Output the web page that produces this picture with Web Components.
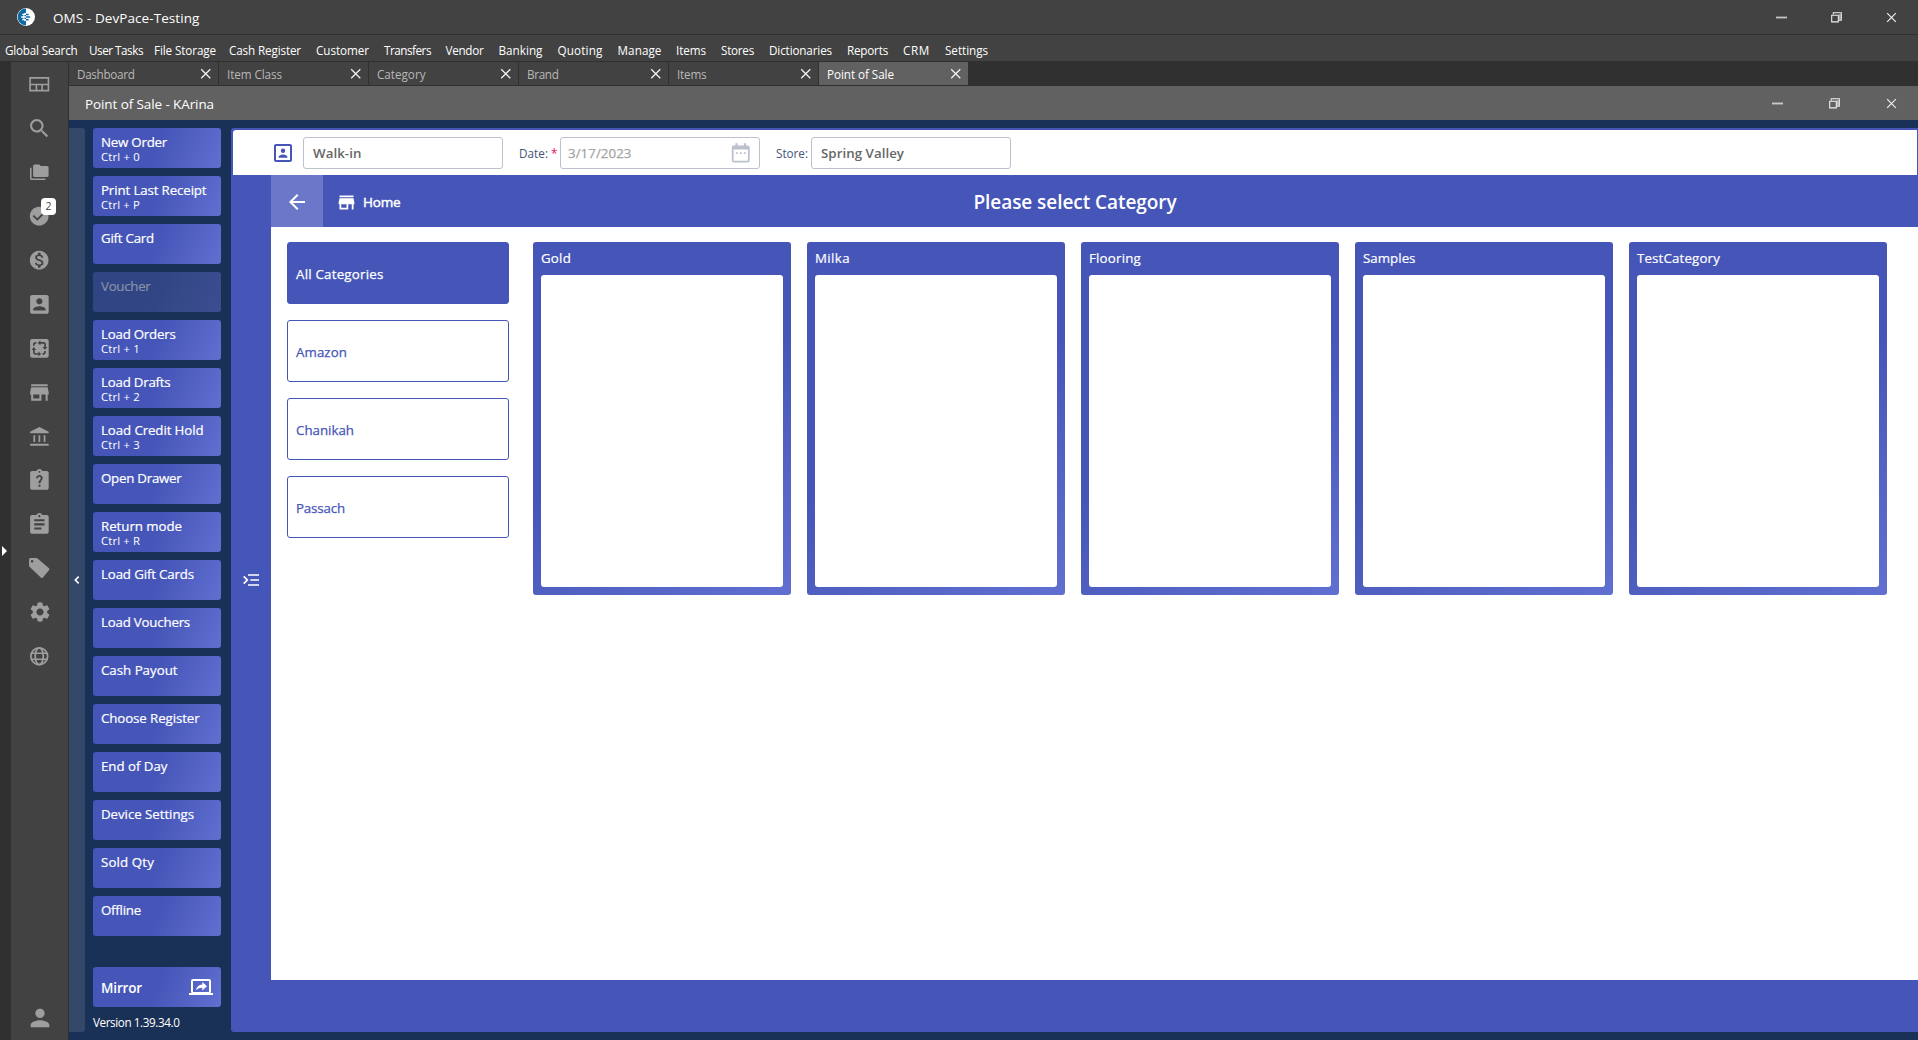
<!DOCTYPE html>
<html lang="en">
<head>
<meta charset="utf-8">
<title>OMS - DevPace-Testing</title>
<style>
html,body{margin:0;padding:0;height:100%;overflow:hidden}
body{font-family:"Open Sans","Noto Sans","Liberation Sans",sans-serif;background:#424242}
</style>
</head>
<body>
<oms-app></oms-app>
<script>
const ICONS = {
  layout: '<path d="M3 5.800h18v12.400H3zM3 12.200h18M9.200 12v6M14.800 12v6" fill="none" stroke="currentColor" stroke-width="1.6"/>',
  search: '<path d="M15.5 14h-.79l-.28-.27C15.41 12.59 16 11.11 16 9.5 16 5.91 13.09 3 9.5 3S3 5.91 3 9.5 5.91 16 9.5 16c1.61 0 3.09-.59 4.23-1.57l.27.28v.79l5 4.99L20.49 19l-4.99-5zm-6 0C7.01 14 5 11.99 5 9.5S7.01 5 9.5 5 14 7.01 14 9.5 11.99 14 9.5 14z"/>',
  folders: '<path d="M22,4H14L12,2H6A2,2 0 0,0 4,4V16A2,2 0 0,0 6,18H22A2,2 0 0,0 24,16V6A2,2 0 0,0 22,4M2,6H0V20A2,2 0 0,0 2,22H20V20H2V6Z"/>',
  check: '<path d="M12 2C6.48 2 2 6.48 2 12s4.48 10 10 10 10-4.48 10-10S17.52 2 12 2zm-2 15l-5-5 1.41-1.41L10 14.17l7.59-7.59L19 8l-9 9z"/>',
  dollar: '<path d="M12 2C6.48 2 2 6.48 2 12s4.48 10 10 10 10-4.48 10-10S17.52 2 12 2zm1.41 16.09V20h-2.67v-1.93c-1.71-.36-3.16-1.46-3.27-3.4h1.96c.1 1.05.82 1.87 2.65 1.87 1.96 0 2.4-.98 2.4-1.59 0-.83-.44-1.61-2.67-2.14-2.48-.6-4.18-1.62-4.18-3.67 0-1.72 1.39-2.84 3.11-3.21V4h2.67v1.95c1.86.45 2.79 1.86 2.85 3.39H14.3c-.05-1.11-.64-1.87-2.22-1.87-1.5 0-2.4.68-2.4 1.64 0 .84.65 1.39 2.67 1.91s4.18 1.39 4.18 3.91c-.01 1.83-1.38 2.83-3.12 3.16z"/>',
  contact: '<path d="M3 5v14c0 1.1.89 2 2 2h14c1.1 0 2-.9 2-2V5c0-1.1-.9-2-2-2H5c-1.11 0-2 .9-2 2zm12 4c0 1.66-1.34 3-3 3s-3-1.34-3-3 1.34-3 3-3 3 1.34 3 3zm-9 8c0-2 4-3.1 6-3.1s6 1.1 6 3.1v1H6v-1z"/>',
  contactLine: '<path d="M19 5v14H5V5h14m0-2H5c-1.1 0-2 .9-2 2v14c0 1.1.9 2 2 2h14c1.100 0 2-.9 2-2V5c0-1.100-.9-2-2-2z"/><circle cx="12" cy="9.700" r="2.200"/><path d="M7.600 16.800v-.8c0-1.600 2.900-2.500 4.400-2.500s4.400.9 4.400 2.500v.8z"/>',
  exchange: '<rect x="3" y="3" width="18" height="18" rx="2"/><g fill="none" stroke="#424242" stroke-width="1.6"><path d="M12.500 6.700H16q1.500 0 1.500 1.500V11M17.400 14.500V15.600q0 1.900-1.900 1.900H15M11.500 17.400H8.200q-1.500 0-1.500-1.500V13M6.600 9.500V8.600q0-1.900 1.900-1.900H9"/></g><path d="M13 4.400v4.600L10.300 6.700zM15.100 10.600h4.600l-2.300 2.800zM11 15.100v4.600l2.700-2.300zM4.400 13.500h4.500l-2.300-2.900z" fill="#424242"/>',
  store: '<path d="M12,18H6V14H12M21,14V12L20,7H4L3,12V14H4V20H14V14H18V20H20V14M20,4H4V6H20V4Z"/>',
  bank: '<path d="M12 2.800 21 7.400V9H3V7.400zM3 19.200h18v1.900H3zM6.200 10.800h1.700v6.700H6.200zM11.150 10.800h1.700v6.700h-1.700zM16.100 10.800h1.700v6.700h-1.700z"/>',
  ask: '<path fill-rule="evenodd" d="M19 3h-4.180C14.400 1.840 13.300 1 12 1s-2.400.84-2.820 2H5c-1.100 0-2 .9-2 2v14c0 1.100.9 2 2 2h14c1.100 0 2-.9 2-2V5c0-1.100-.9-2-2-2zm-7-.2a.9.900 0 1 1 0 1.800.9.900 0 0 1 0-1.800zM11.100 16.200h1.900v1.900h-1.900zM8.800 9.900c0-1.800 1.400-3.100 3.200-3.100s3.200 1.300 3.200 3c0 2.100-2.200 2.400-2.200 4.900h-1.900c0-3.200 2.200-3.200 2.200-4.900 0-.7-.6-1.300-1.300-1.300s-1.300.6-1.300 1.400z"/>',
  clipboard: '<path d="M19 3h-4.180C14.400 1.840 13.300 1 12 1c-1.300 0-2.400.84-2.820 2H5c-1.100 0-2 .9-2 2v14c0 1.100.9 2 2 2h14c1.100 0 2-.9 2-2V5c0-1.100-.9-2-2-2zm-7 0c.55 0 1 .45 1 1s-.45 1-1 1-1-.45-1-1 .45-1 1-1zm2 14H7v-2h7v2zm3-4H7v-2h10v2zm0-4H7V7h10v2z"/>',
  tag: '<path fill-rule="evenodd" d="M2 3.500C2 2.700 2.700 2 3.500 2H9q.9 0 1.600.6L21.300 11.800q1.200 1 .2 2.200L15.800 20.900q-1.100 1.200-2.300.1L2.700 10.700Q2 10 2 9zM5 3.900a1.300 1.300 0 1 0 0 2.600 1.300 1.300 0 0 0 0-2.600z"/>',
  gear: '<path d="M19.140 12.940c.04-.3.06-.61.06-.94s-.02-.64-.07-.94l2.030-1.580c.18-.14.23-.41.12-.61l-1.920-3.320c-.12-.22-.37-.29-.59-.22l-2.390.96c-.5-.38-1.030-.7-1.620-.94L14.400 2.810c-.04-.24-.24-.41-.48-.41h-3.840c-.24 0-.43.17-.47.41l-.36 2.540c-.59.24-1.130.57-1.620.94l-2.390-.96c-.22-.08-.47 0-.59.22L2.740 8.870c-.12.21-.08.47.12.61l2.030 1.580c-.05.3-.09.63-.09.94s.02.64.07.94l-2.030 1.580c-.18.14-.23.41-.12.61l1.920 3.320c.12.22.37.29.59.22l2.390-.96c.5.38 1.030.7 1.620.94l.36 2.540c.05.24.24.41.48.41h3.840c.24 0 .44-.17.47-.41l.36-2.540c.59-.24 1.130-.56 1.620-.94l2.390.96c.22.08.47 0 .59-.22l1.920-3.320c.12-.22.07-.47-.12-.61l-2.010-1.580zM12 15.600c-1.980 0-3.600-1.620-3.600-3.600s1.620-3.600 3.600-3.600 3.600 1.620 3.600 3.600-1.620 3.600-3.600 3.600z"/>',
  globe: '<g fill="none" stroke="currentColor" stroke-width="1.800"><circle cx="12" cy="12" r="9"/><ellipse cx="12" cy="12" rx="4.300" ry="9"/><path d="M3.800 8.800h16.400M3.800 15.200h16.400"/></g>',
  person: '<path d="M12 12c2.210 0 4-1.790 4-4s-1.790-4-4-4-4 1.790-4 4 1.790 4 4 4zm0 2c-2.670 0-8 1.340-8 4v2h16v-2c0-2.660-5.330-4-8-4z"/>',
  close: '<path d="M2.500 2.500 21.500 21.500M21.500 2.500 2.500 21.500" fill="none" stroke="currentColor" stroke-width="2.600"/>',
  minus: '<path d="M0 10h24v4H0z" opacity=".75"/>',
  restore: '<path d="M1.500 7h14.500v14.500H1.500z" fill="none" stroke="currentColor" stroke-width="2.400"/><path d="M5 5.500V1.500H22.500V18H17" fill="none" stroke="currentColor" stroke-width="2.400"/><path d="M17.500 5h4v12h-4z" opacity=".6"/>',
  back: '<path d="M20 11H7.830l5.590-5.590L12 4l-8 8 8 8 1.410-1.410L7.830 13H20v-2z"/>',
  indent: '<path d="M7.500 4.500H24M11 12H24M7.500 19.500H24M1 6.500 6.500 12 1 17.500" fill="none" stroke="currentColor" stroke-width="2.600"/>',
  chevron: '<path d="M16 4 8 12l8 8" fill="none" stroke="currentColor" stroke-width="4"/>',
  calendar: '<path fill-rule="evenodd" d="M4 4h2V1.500h2.500V4h7V1.500H18V4h2q2 0 2 2v15q0 2-2 2H4q-2 0-2-2V6q0-2 2-2zM4 8.500V21h16V8.500zM6.500 11.500h2v2h-2zM11 11.500h2v2h-2zM15.500 11.500h2v2h-2z"/>',
  share: '<path fill-rule="evenodd" d="M4 4h16q2 0 2 2v10.500q0 1.200-.8 1.500H24v2H0v-2h2.800Q2 17.700 2 16.500V6q0-2 2-2zM4 6v11h16V6z"/><path d="M7 15.200q.8-5 6.300-5.600V7l4.700 4.200-4.700 4.200v-2.600q-3.700-.1-6.300 2.400z"/>',
  logo: '<circle cx="12" cy="12" r="12" fill="#fff"/><path d="M12 0.800a11.200 11.200 0 0 0 0 22.400z" fill="#0e6aa5"/><path d="M7 8.500h5M5.500 12H12M7 15.500h5" stroke="#fff" stroke-width="1.700"/><path d="M12 7q-3 0-3 5t3 5" fill="none" stroke="#fff" stroke-width="1.500"/><path d="M12 8.500h3.500M12 12h5.500M12 15.500h3.500" stroke="#0e6aa5" stroke-width="2"/>'
};

class Base extends HTMLElement {
  constructor() { super(); this.attachShadow({ mode: 'open' }); }
  attr(n, d = '') { return this.getAttribute(n) ?? d; }
  connectedCallback() { this.shadowRoot.innerHTML = this.view(); }
}

customElements.define('oms-icon', class extends Base {
  view() {
    const s = this.attr('size', '24');
    return `<style>:host{display:block;flex:none;width:${s}px;height:${s}px}svg{display:block}</style>
    <svg width="${s}" height="${s}" viewBox="0 0 24 24" fill="currentColor">${ICONS[this.attr('name')]}</svg>`;
  }
});

/* Single-line label whose tracking is adjusted to fill the width given in "w". */
customElements.define('oms-text', class extends Base {
  connectedCallback() {
    this.shadowRoot.innerHTML = `<style>:host{display:block;flex:none;white-space:nowrap;width:${this.attr('w')}px}span{display:inline-block}</style><span><slot></slot></span>`;
    const s = this.shadowRoot.querySelector('span');
    const n = this.textContent.length;
    s.style.letterSpacing = '0px';
    const gap = (Number(this.attr('w')) - s.getBoundingClientRect().width) / n;
    s.style.letterSpacing = gap.toFixed(3) + 'px';
  }
});

customElements.define('oms-caption', class extends Base {
  view() {
    return `<style>:host{display:flex;align-items:center;color:#fff;box-sizing:border-box;font-size:13.5px}
    .c{margin-left:auto;display:flex;align-items:center;padding-right:21px;color:#eee}
    .c oms-icon:nth-child(2){margin:0 ${this.attr('g2', 44)}px 0 ${this.attr('g1', 44)}px}</style>
    <slot></slot><div class="c"><oms-icon name="minus" size="11"></oms-icon><oms-icon name="restore" size="11"></oms-icon><oms-icon name="close" size="11"></oms-icon></div>`;
  }
});

customElements.define('oms-menu', class extends Base {
  view() {
    const items = [['Global Search',72.5,0],['User Tasks',54,11.5],['File Storage',62,11],['Cash Register',72,13],['Customer',53,15],['Transfers',47,15],['Vendor',38,14.5],['Banking',44,15],['Quoting',45,15],['Manage',44,15],['Items',30,14.5],['Stores',33,15],['Dictionaries',63,15],['Reports',41,15],['CRM',27,15],['Settings',43,15]];
    return `<style>:host{display:flex;align-items:center;height:26px;padding:3px 0 0 5px;box-sizing:border-box;border:0;color:#fff;font-size:11.700px;line-height:16px}</style>` +
      items.map(([t, w, m]) => `<oms-text w="${w}" style="margin-left:${m}px">${t}</oms-text>`).join('');
  }
});

customElements.define('oms-tab', class extends Base {
  view() {
    const on = this.hasAttribute('active');
    return `<style>:host{display:flex;align-items:center;justify-content:space-between;width:149px;height:23px;box-sizing:border-box;padding:0 7px 0 8px;background:${on ? '#616161' : '#424242'};color:${on ? '#fff' : '#b8b8b8'};font-size:11.700px;line-height:17px}
    oms-text{padding-top:2px}oms-icon{color:#f4f4f4}</style><oms-text w="${this.attr('w')}">${this.attr('label')}</oms-text><oms-icon name="close" size="11.500"></oms-icon>`;
  }
});

customElements.define('oms-rail', class extends Base {
  view() {
    const icons = [['layout',24.5],['search',24.8],['folders',18.6],['check',22.4],['dollar',22.4],['contact',24.8],['exchange',24.8],['store',24.8],['bank',24.8],['ask',24.8],['clipboard',24.8],['tag',24.5],['gear',24],['globe',22.5]];
    return `<style>:host{display:flex;flex-direction:column;align-items:center;width:57px;box-sizing:border-box;background:#424242;color:#9e9e9e}
    .i{height:44px;width:57px;display:flex;align-items:center;justify-content:center;position:relative}
    b{position:absolute;left:30px;top:4px;width:15px;height:17px;border-radius:4px;background:#fff;color:#424242;font:10.500px/17px "Open Sans",sans-serif;text-align:center}
    .u{margin-top:auto;height:44px}</style>` +
      icons.map(([n, s]) => `<div class="i"><oms-icon name="${n}" size="${s}"></oms-icon>${n === 'check' ? '<b>2</b>' : ''}</div>`).join('') +
      `<div class="i u"><oms-icon name="person" size="28"></oms-icon></div>`;
  }
});

customElements.define('oms-action', class extends Base {
  view() {
    const k = this.attr('key');
    return `<style>:host{display:block;flex:none;width:128px;height:40px;box-sizing:border-box;padding:6px 8px;border-radius:3px;color:#fff;background:linear-gradient(114deg,#4656b8 50%,#606fd0);font-size:13.300px;line-height:16px;font-weight:500}
    :host([disabled]){background:linear-gradient(114deg,#314584 50%,#3d4e90);color:#8791a9}
    .l{-webkit-text-stroke:.2px currentColor}
    .k{font-size:11.300px;line-height:13px;font-weight:400}</style>
    <oms-text class="l" w="${this.attr('w')}">${this.attr('label')}</oms-text>${k ? `<oms-text class="k" w="39">${k}</oms-text>` : ''}`;
  }
});

customElements.define('oms-actions', class extends Base {
  view() {
    const a = [['New Order',66,'Ctrl + 0'],['Print Last Receipt',105.5,'Ctrl + P'],['Gift Card',53],['Voucher',49.5,'',1],['Load Orders',74.5,'Ctrl + 1'],['Load Drafts',69.5,'Ctrl + 2'],['Load Credit Hold',102.5,'Ctrl + 3'],['Open Drawer',80.5],['Return mode',81,'Ctrl + R'],['Load Gift Cards',93],['Load Vouchers',89],['Cash Payout',76.500],['Choose Register',98.500],['End of Day',66.500],['Device Settings',93],['Sold Qty',53],['Offline',40]];
    return `<style>:host{display:flex;flex-direction:column;width:128px;gap:8px}
    .m{margin-top:23px;height:40px;box-sizing:border-box;border-radius:3px;padding:0 8px;display:flex;justify-content:space-between;align-items:center;color:#fff;background:linear-gradient(114deg,#4656b8 50%,#606fd0);font-size:13.500px;font-weight:600}
    .m oms-text{padding-top:2px}.v{font-size:11.700px;line-height:16px;color:#fff;margin-top:-1px}</style>` +
      a.map(([l, w, k, d]) => `<oms-action label="${l}" w="${w}" key="${k || ''}" ${d ? 'disabled' : ''}></oms-action>`).join('') +
      `<div class="m"><oms-text w="41">Mirror</oms-text><oms-icon name="share" size="24"></oms-icon></div><oms-text class="v" w="86.500">Version 1.39.34.0</oms-text>`;
  }
});

customElements.define('oms-field', class extends Base {
  view() {
    return `<style>:host{display:flex;align-items:center;justify-content:space-between;width:200px;height:32px;box-sizing:border-box;border:1px solid #bcc0cf;border-radius:3px;padding:0 9px;background:#fff;color:#666;font-size:13.300px;font-weight:600}</style><slot></slot>`;
  }
});

customElements.define('oms-orderbar', class extends Base {
  view() {
    return `<style>:host{display:flex;align-items:center;height:45px;margin:2px 1px 0 2px;box-sizing:border-box;padding:1px 0 0 38px;background:#fff;border-radius:3px 0 0 0;color:#43557a;font-size:11.700px}
    .i{color:#4656b8}i{color:#e0115f;font-style:normal;width:5px;margin:0 4px 0 3px}.d{font-weight:500;color:#a3a3a3}.d oms-text{-webkit-text-stroke:.25px currentColor}
    oms-icon[name=calendar]{color:#bcc0cf}</style>
    <oms-icon class="i" name="contactLine" size="24"></oms-icon>
    <oms-field style="margin-left:8px"><oms-text w="48.500">Walk-in</oms-text></oms-field>
    <oms-text w="29" style="margin-left:16px">Date:</oms-text><i>*</i>
    <oms-field class="d" style="padding-left:7px;padding-right:8px"><oms-text w="63.500">3/17/2023</oms-text><oms-icon name="calendar" size="21.500"></oms-icon></oms-field>
    <oms-text w="32" style="margin-left:16px">Store:</oms-text>
    <oms-field style="margin-left:3px"><oms-text w="83">Spring Valley</oms-text></oms-field>`;
  }
});

customElements.define('oms-category', class extends Base {
  view() {
    return `<style>:host{display:flex;align-items:center;width:222px;height:62px;box-sizing:border-box;border:1px solid #4656b8;border-radius:3px;padding:2px 8px 0;color:#4656b8;font-size:13.300px;font-weight:500;-webkit-text-stroke:.25px currentColor}
    :host([active]){background:#4656b8;color:#fff}</style><oms-text w="${this.attr('w')}">${this.attr('label')}</oms-text>`;
  }
});

customElements.define('oms-card', class extends Base {
  view() {
    return `<style>:host{display:flex;flex-direction:column;width:258px;height:353px;box-sizing:border-box;padding:8px;border-radius:3px;color:#fff;background:linear-gradient(147deg,#4656b8 50%,#606fd0);font-size:13.300px;font-weight:500;line-height:17px;-webkit-text-stroke:.2px currentColor}
    div{margin-top:8px;flex:1;background:#fff;border-radius:3px}</style><oms-text w="${this.attr('w')}">${this.attr('label')}</oms-text><div></div>`;
  }
});

customElements.define('oms-pos', class extends Base {
  view() {
    return `<style>:host{display:flex;flex-direction:column;background:#4656b8;border-radius:3px 0 0 3px;min-width:0}
    .body{display:flex;height:805px}.rail{width:40px;height:805px;box-sizing:border-box;padding:5px 1px 0 0;display:flex;align-items:center;justify-content:center;color:#fff}
    .main{flex:1;display:flex;flex-direction:column}
    .head{height:52px;display:flex;align-items:center;color:#fff;font-weight:600;font-size:13.500px}
    .b{width:52px;height:52px;box-sizing:border-box;padding-top:2px;background:#6b77c9;display:flex;align-items:center;justify-content:center}
    .h{font-weight:500;-webkit-text-stroke:.45px currentColor}
    .t{font-size:19px;padding-top:1px}.content{flex:1;background:#fff;display:flex;align-items:flex-start;padding:15px 16px;gap:24px}
    .list{display:flex;flex-direction:column;gap:16px}.cards{display:flex;gap:16px}</style>
    <oms-orderbar></oms-orderbar>
    <div class="body"><div class="rail"><oms-icon name="indent" size="16"></oms-icon></div>
    <div class="main"><div class="head"><div class="b"><oms-icon name="back" size="24"></oms-icon></div>
    <oms-icon name="store" size="21" style="margin-left:13px;padding-top:2px"></oms-icon><oms-text class="h" w="37.500" style="margin-left:6px;padding-top:2px">Home</oms-text>
    <oms-text class="t" w="203" style="margin-left:573px">Please select Category</oms-text></div>
    <div class="content"><div class="list">
      <oms-category active label="All Categories" w="87.500"></oms-category><oms-category label="Amazon" w="51"></oms-category><oms-category label="Chanikah" w="58"></oms-category><oms-category label="Passach" w="49"></oms-category></div>
    <div class="cards"><oms-card label="Gold" w="30"></oms-card><oms-card label="Milka" w="35"></oms-card><oms-card label="Flooring" w="52"></oms-card><oms-card label="Samples" w="52.500"></oms-card><oms-card label="TestCategory" w="83"></oms-card></div></div></div></div>`;
  }
});

customElements.define('oms-app', class extends Base {
  view() {
    return `<style>:host{display:flex;flex-direction:column;width:1918px;height:1040px;background:#424242;overflow:hidden}
    .title{flex:none;height:35px;padding:0 0 0 17px;border-bottom:1px solid #303030}
    oms-menu{flex:none}
    .row{display:flex;flex:1;min-height:0}
    .edge{width:11px;background:#303030;display:flex;align-items:center;justify-content:flex-start}
    .edge i{margin-left:2px;border-left:5px solid #fff;border-top:5px solid transparent;border-bottom:5px solid transparent}
    .work{flex:1;min-width:0;display:flex;flex-direction:column;border-left:1px solid #303030}
    .tabs{display:flex;gap:1px;background:#303030;height:24px;flex:none;border-top:1px solid #303030}
    .sub{flex:none;height:34px;padding:1px 0 0 16px;background:#616161}
    .pos{flex:1;min-height:0;display:flex;background:#193057;padding:8px 0}
    .drawer{width:16px;background:#344869;border-radius:0 3px 3px 0;display:flex;align-items:center;justify-content:center;color:#fff}
    oms-rail{border-top:1px solid #303030}
    oms-actions{margin:0 10px 0 8px}oms-pos{flex:1}</style>
    <oms-caption class="title"><oms-icon name="logo" size="18"></oms-icon><oms-text w="146.500" style="margin-left:18px;padding-top:1px">OMS - DevPace-Testing</oms-text></oms-caption>
    <oms-menu></oms-menu>
    <div class="row"><div class="edge"><i></i></div><oms-rail></oms-rail>
    <div class="work"><div class="tabs"><oms-tab label="Dashboard" w="57.500"></oms-tab><oms-tab label="Item Class" w="55"></oms-tab><oms-tab label="Category" w="48.500"></oms-tab><oms-tab label="Brand" w="31.500"></oms-tab><oms-tab label="Items" w="29.500"></oms-tab><oms-tab active label="Point of Sale" w="67"></oms-tab></div>
    <oms-caption class="sub" g1="46" g2="46"><oms-text w="129">Point of Sale - KArina</oms-text></oms-caption>
    <div class="pos"><div class="drawer"><oms-icon name="chevron" size="10"></oms-icon></div><oms-actions></oms-actions><oms-pos></oms-pos></div></div></div>`;
  }
});
</script>
</body>
</html>
